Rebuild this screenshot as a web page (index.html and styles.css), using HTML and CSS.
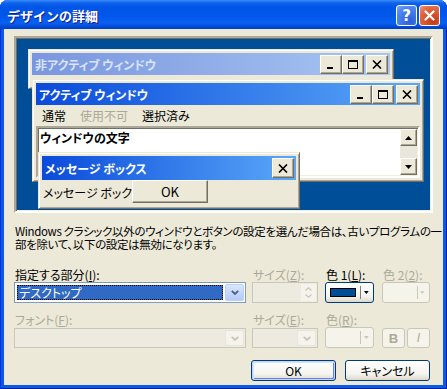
FILE: index.html
```html
<!DOCTYPE html>
<html lang="ja">
<head>
    <meta charset="UTF-8">
    <title>デザインの詳細</title>
    <link rel="stylesheet" href="styles.css">
</head>
<body>
    <div class="dialog">
        <div class="titlebar">
            <span class="title">デザインの詳細</span>
            <div class="title-btns">
                <span class="xp-cap help">?</span>
                <span class="xp-cap close">
                    <svg width="11" height="11" viewBox="0 0 11 11"><path d="M1.5 1.5l8 8M9.5 1.5l-8 8" stroke="#fff" stroke-width="2.2" stroke-linecap="round"/></svg>
                </span>
            </div>
        </div>

        <div class="client">
            <!-- preview of window parts -->
            <div class="preview">
                <div class="win inactive">
                    <div class="caption">
                        <span class="cap-text">非アクティブ ウィンドウ</span>
                        <span class="cap-btns">
                            <span class="cbtn"><svg width="10" height="9" viewBox="0 0 10 9"><rect x="1" y="7" width="6" height="2"/></svg></span>
                            <span class="cbtn"><svg width="10" height="9" viewBox="0 0 10 9"><rect x="0.5" y="0.5" width="9" height="8" fill="none" stroke="#000"/><rect x="0" y="1" width="10" height="1"/></svg></span>
                            <span class="cbtn gap"><svg width="10" height="9" viewBox="0 0 10 9"><path d="M1 0.5l8 8M9 0.5l-8 8" stroke="#000" stroke-width="1.6"/></svg></span>
                        </span>
                    </div>
                </div>

                <div class="win active">
                    <div class="caption">
                        <span class="cap-text">アクティブ ウィンドウ</span>
                        <span class="cap-btns">
                            <span class="cbtn"><svg width="10" height="9" viewBox="0 0 10 9"><rect x="1" y="7" width="6" height="2"/></svg></span>
                            <span class="cbtn"><svg width="10" height="9" viewBox="0 0 10 9"><rect x="0.5" y="0.5" width="9" height="8" fill="none" stroke="#000"/><rect x="0" y="1" width="10" height="1"/></svg></span>
                            <span class="cbtn gap"><svg width="10" height="9" viewBox="0 0 10 9"><path d="M1 0.5l8 8M9 0.5l-8 8" stroke="#000" stroke-width="1.6"/></svg></span>
                        </span>
                    </div>
                    <div class="menubar">
                        <span>通常</span>
                        <span class="off">使用不可</span>
                        <span>選択済み</span>
                    </div>
                    <div class="textbox">
                        <div class="text-content">ウィンドウの文字</div>
                        <div class="scrollbar">
                            <span class="sb-btn"><svg width="7" height="4" viewBox="0 0 7 4"><path d="M0 4L3.5 0L7 4z"/></svg></span>
                            <span class="sb-track"></span>
                            <span class="sb-btn"><svg width="7" height="4" viewBox="0 0 7 4"><path d="M0 0L3.5 4L7 0z"/></svg></span>
                        </div>
                    </div>
                </div>

                <div class="win msgbox">
                    <div class="caption">
                        <span class="cap-text">メッセージ ボックス</span>
                        <span class="cap-btns">
                            <span class="cbtn"><svg width="10" height="9" viewBox="0 0 10 9"><path d="M1 0.5l8 8M9 0.5l-8 8" stroke="#000" stroke-width="1.6"/></svg></span>
                        </span>
                    </div>
                    <div class="msg-body">
                        <span class="msg-text">メッセージ ボックスの文字</span>
                        <span class="msg-ok">OK</span>
                    </div>
                </div>
            </div>

            <p class="note">
                <span class="note-line">Windows クラシック以外のウィンドウとボタンの設定を選んだ場合は、古いプログラムの一</span>
                <span class="note-line">部を除いて、以下の設定は無効になります。</span>
            </p>

            <div class="fields">
                <label>指定する部分(<u>I</u>):</label>
                <label class="off">サイズ(<u>Z</u>):</label>
                <label>色 1(<u>L</u>):</label>
                <label class="off">色 2(<u>2</u>):</label>

                <div class="combo w-item">
                    <span class="combo-value"><span class="sel">デスクトップ</span></span>
                    <span class="drop"><svg width="8" height="5" viewBox="0 0 8 5"><path d="M0.8 0.8L4 4L7.2 0.8" fill="none" stroke="#4D6185" stroke-width="1.8"/></svg></span>
                </div>
                <div class="spin w-size">
                    <span class="spin-btns">
                        <svg width="7" height="4" viewBox="0 0 7 4"><path d="M0.5 3.5L3.5 0.8L6.5 3.5" fill="none" stroke="#C9C7BA" stroke-width="1.2"/></svg>
                        <svg width="7" height="4" viewBox="0 0 7 4"><path d="M0.5 0.5L3.5 3.2L6.5 0.5" fill="none" stroke="#C9C7BA" stroke-width="1.2"/></svg>
                    </span>
                </div>
                <div class="colorbtn w-color">
                    <span class="swatch"></span>
                    <span class="sep"></span>
                    <svg width="5" height="3" viewBox="0 0 5 3"><path d="M0 0h5L2.5 3z"/></svg>
                </div>
                <div class="colorbtn disabled w-color2">
                    <span class="swatch blank"></span>
                    <span class="sep"></span>
                    <svg width="5" height="3" viewBox="0 0 5 3"><path d="M0 0h5L2.5 3z" fill="#C9C7BA"/></svg>
                </div>

                <label class="off row2">フォント(<u>F</u>):</label>
                <label class="off row2">サイズ(<u>E</u>):</label>
                <label class="off row2">色(<u>R</u>):</label>
                <span class="row2"></span>

                <div class="combo disabled w-item">
                    <span class="combo-value"></span>
                    <span class="drop"><svg width="8" height="5" viewBox="0 0 8 5"><path d="M0.8 0.8L4 4L7.2 0.8" fill="none" stroke="#C9C7BA" stroke-width="1.8"/></svg></span>
                </div>
                <div class="combo disabled w-size">
                    <span class="combo-value"></span>
                    <span class="drop"><svg width="8" height="5" viewBox="0 0 8 5"><path d="M0.8 0.8L4 4L7.2 0.8" fill="none" stroke="#C9C7BA" stroke-width="1.8"/></svg></span>
                </div>
                <div class="colorbtn disabled w-color">
                    <span class="swatch blank"></span>
                    <span class="sep"></span>
                    <svg width="5" height="3" viewBox="0 0 5 3"><path d="M0 0h5L2.5 3z" fill="#C9C7BA"/></svg>
                </div>
                <div class="style-btns">
                    <span class="sbtn bold">B</span>
                    <span class="sbtn italic">I</span>
                </div>
            </div>

            <div class="actions">
                <span class="btn default">OK</span>
                <span class="btn">キャンセル</span>
            </div>
        </div>
    </div>
</body>
</html>
```

FILE: styles.css
```css
* { box-sizing: border-box; }

body {
    margin: 0;
    background: #fff;
    color: #000;
    font-family: "Noto Sans CJK JP", sans-serif;
    font-size: 12px;
    font-feature-settings: "palt";
}

/* XP frame */
.dialog {
    width: 447px;
    height: 389px;
    display: flex;
    flex-direction: column;
    background: #0A5AE6;
    border-radius: 8px 8px 0 0;
    overflow: hidden;
    box-shadow: inset 1px 0 #0831D9, inset -1px 0 #001EA0, inset 0 -1px #001EA0;
}

.titlebar {
    height: 29px;
    flex: none;
    display: flex;
    align-items: center;
    justify-content: space-between;
    padding: 0 7px 0 7px;
    background: linear-gradient(#3C8DF7 0, #0D62EE 3px, #0055E6 7px, #0057EA 16px, #0A60F0 23px, #0048D6 27px, #003FC0 29px);
}

.title {
    color: #fff;
    font-weight: bold;
    font-size: 13px;
    font-feature-settings: normal;
    text-shadow: 1px 1px #0F1B8C;
    margin-top: 1px;
}

.title-btns {
    display: flex;
    gap: 2px;
    margin-top: 2px;
}

.xp-cap {
    width: 21px;
    height: 21px;
    border: 1px solid #fff;
    border-radius: 3px;
    display: flex;
    align-items: center;
    justify-content: center;
    color: #fff;
    font-family: "DejaVu Sans", sans-serif;
    font-weight: bold;
    font-size: 15px;
}

.xp-cap.help {
    background: radial-gradient(circle at 70% 80%, #2B5FDD, #4F86F2 70%, #7FA7F7);
}

.xp-cap.close {
    background: radial-gradient(circle at 70% 80%, #C23A12, #E26A45 70%, #EE9A80);
}

.client {
    flex: 1;
    margin: 0 4px 4px;
    background: #ECE9D8;
    padding: 7px 10px 0;
}

/* preview */
.preview {
    position: relative;
    height: 177px;
    background: #004E98;
    border: 2px solid;
    border-color: #ACA899 #fff #fff #ACA899;
    box-shadow: inset 1px 1px #716F64, inset -1px -1px #F1EFE2;
    overflow: hidden;
}

.win {
    position: absolute;
    background: #ECE9D8;
    border: 1px solid;
    border-color: #ECE9D8 #716F64 #716F64 #ECE9D8;
    box-shadow: inset 1px 1px #fff, inset -1px -1px #ACA899;
    padding: 3px;
    display: flex;
    flex-direction: column;
}

.win.inactive { left: 12px; top: 11px; width: 366px; height: 40px; }
.win.active { left: 16px; top: 41px; width: 392px; height: 103px; }
.win.msgbox { left: 22px; top: 114px; width: 262px; height: 57px; }

.caption {
    height: 22px;
    flex: none;
    display: flex;
    align-items: center;
    justify-content: space-between;
    padding: 0 2px 0 3px;
    background: linear-gradient(to right, #0A4BDB, #5AA8F8);
}

.inactive .caption {
    background: linear-gradient(to right, #7A96DF, #A8C6F2);
}

.msgbox .caption { height: 24px; }

.cap-text {
    color: #fff;
    font-weight: bold;
    font-size: 12px;
}

.inactive .cap-text { color: #D8E4F8; }

.cap-btns { display: flex; }

.cbtn, .sb-btn {
    width: 22px;
    height: 19px;
    background: #ECE9D8;
    border: 1px solid;
    border-color: #fff #716F64 #716F64 #fff;
    box-shadow: inset -1px -1px #ACA899;
    display: flex;
    align-items: center;
    justify-content: center;
}

.cbtn.gap { margin-left: 2px; }
.msgbox .cbtn { height: 20px; }

.menubar {
    height: 20px;
    flex: none;
    display: flex;
    align-items: center;
    gap: 14px;
    padding-left: 6px;
}

.off { color: #ACA899; }

.textbox {
    margin-top: 1px;
    flex: 1;
    display: flex;
    background: #fff;
    border: 2px solid;
    border-color: #ACA899 #fff #fff #ACA899;
    box-shadow: inset 1px 1px #716F64, inset -1px -1px #F1EFE2;
    padding: 1px;
}

.text-content {
    flex: 1;
    font-weight: bold;
    padding: 0 1px;
    line-height: 18px;
}

.scrollbar {
    width: 17px;
    display: flex;
    flex-direction: column;
}

.sb-btn { width: 17px; height: 17px; }

.sb-track {
    flex: 1;
    background: #E9E7DC;
}

.msg-body {
    position: relative;
    flex: 1;
    padding-left: 1px;
    display: flex;
    align-items: center;
}

.msg-text {
    white-space: nowrap;
}

.msg-ok {
    position: absolute;
    left: 90px;
    top: 0;
    width: 76px;
    height: 23px;
    display: flex;
    align-items: center;
    justify-content: center;
    background: #ECE9D8;
    border: 1px solid;
    border-color: #fff #716F64 #716F64 #fff;
    box-shadow: inset -1px -1px #ACA899;
    font-size: 13px;
}

/* lower part */
.note {
    margin: 12px 0 0 1px;
    font-size: 11.5px;
    letter-spacing: -0.35px;
}

.note-line {
    display: block;
    height: 13px;
    line-height: 13px;
    white-space: nowrap;
}

.fields {
    margin-top: 17px;
    display: grid;
    grid-template-columns: 238px 73px 57px 48px;
    align-items: end;
}

.fields label {
    line-height: 13px;
    margin: 0 0 1px 1px;
}

.fields .row2 { margin-top: 10px; }

.w-item { width: 232px; }
.w-size { width: 66px; }
.w-color { width: 49px; }
.w-color2 { width: 48px; }

.combo {
    height: 21px;
    display: flex;
    border: 1px solid #7F9DB9;
    background: #fff;
    padding: 1px;
}

.combo-value {
    flex: 1;
    display: flex;
    padding: 1px 2px 1px 1px;
}

.sel {
    flex: 1;
    background: #316AC5;
    color: #fff;
    outline: 1px dotted #000;
    outline-offset: -1px;
    padding-left: 2px;
    line-height: 15px;
}

.drop {
    width: 19px;
    display: flex;
    align-items: center;
    justify-content: center;
    border: 1px solid #BAD0FC;
    border-radius: 2px;
    background: linear-gradient(#DCE6FD, #B4CAF8);
}

.combo.disabled {
    height: 20px;
    border-color: #C9C7BA;
    background: #EDEBE0;
}

.combo.disabled .drop {
    border-color: #E8E6DA;
    background: #F4F3EC;
}

.spin {
    height: 21px;
    border: 1px solid #C9C7BA;
    background: #EDEBE0;
    display: flex;
    justify-content: flex-end;
    padding: 1px;
}

.spin-btns {
    width: 15px;
    display: flex;
    flex-direction: column;
    align-items: center;
    justify-content: center;
    gap: 3px;
    background: #F4F3EC;
}

.colorbtn {
    height: 21px;
    display: flex;
    align-items: center;
    padding: 0 4px 0 4px;
    border: 1px solid #003C74;
    border-radius: 3px;
    background: linear-gradient(#FFFFFF, #F4F3EE 70%, #DCD8CC);
}

.swatch {
    width: 28px;
    height: 9px;
    border: 1px solid #000;
    background: #004E98;
}

.swatch.blank {
    border-color: transparent;
    background: none;
}

.sep {
    width: 1px;
    height: 13px;
    margin: 0 3px 0 4px;
    background: #808080;
}

.colorbtn.disabled {
    border-color: #C9C7BA;
    background: #F5F4EA;
}

.colorbtn.disabled .sep { background: #C9C7BA; }

.style-btns {
    display: flex;
    gap: 2px;
}

.sbtn {
    width: 23px;
    height: 20px;
    display: flex;
    align-items: center;
    justify-content: center;
    border: 1px solid #C9C7BA;
    border-radius: 3px;
    background: #F5F4EA;
    color: #ACA899;
    font-family: "Liberation Sans", sans-serif;
}

.sbtn.bold { font-weight: bold; font-size: 13px; }
.sbtn.italic { font-style: italic; font-size: 12px; }

.actions {
    margin-top: 12px;
    display: flex;
    justify-content: flex-end;
    gap: 9px;
    padding-right: 3px;
}

.btn {
    width: 85px;
    height: 21px;
    display: flex;
    align-items: center;
    justify-content: center;
    border: 1px solid #003C74;
    border-radius: 3px;
    background: linear-gradient(#FFFFFF, #F4F3EE 70%, #DCD8CC);
}

.btn.default {
    box-shadow: inset 0 0 0 1px #C4D6F7, inset 1px 1px 0 1px #CEE7FF, inset -1px -1px 0 1px #6982EE;
}
```
